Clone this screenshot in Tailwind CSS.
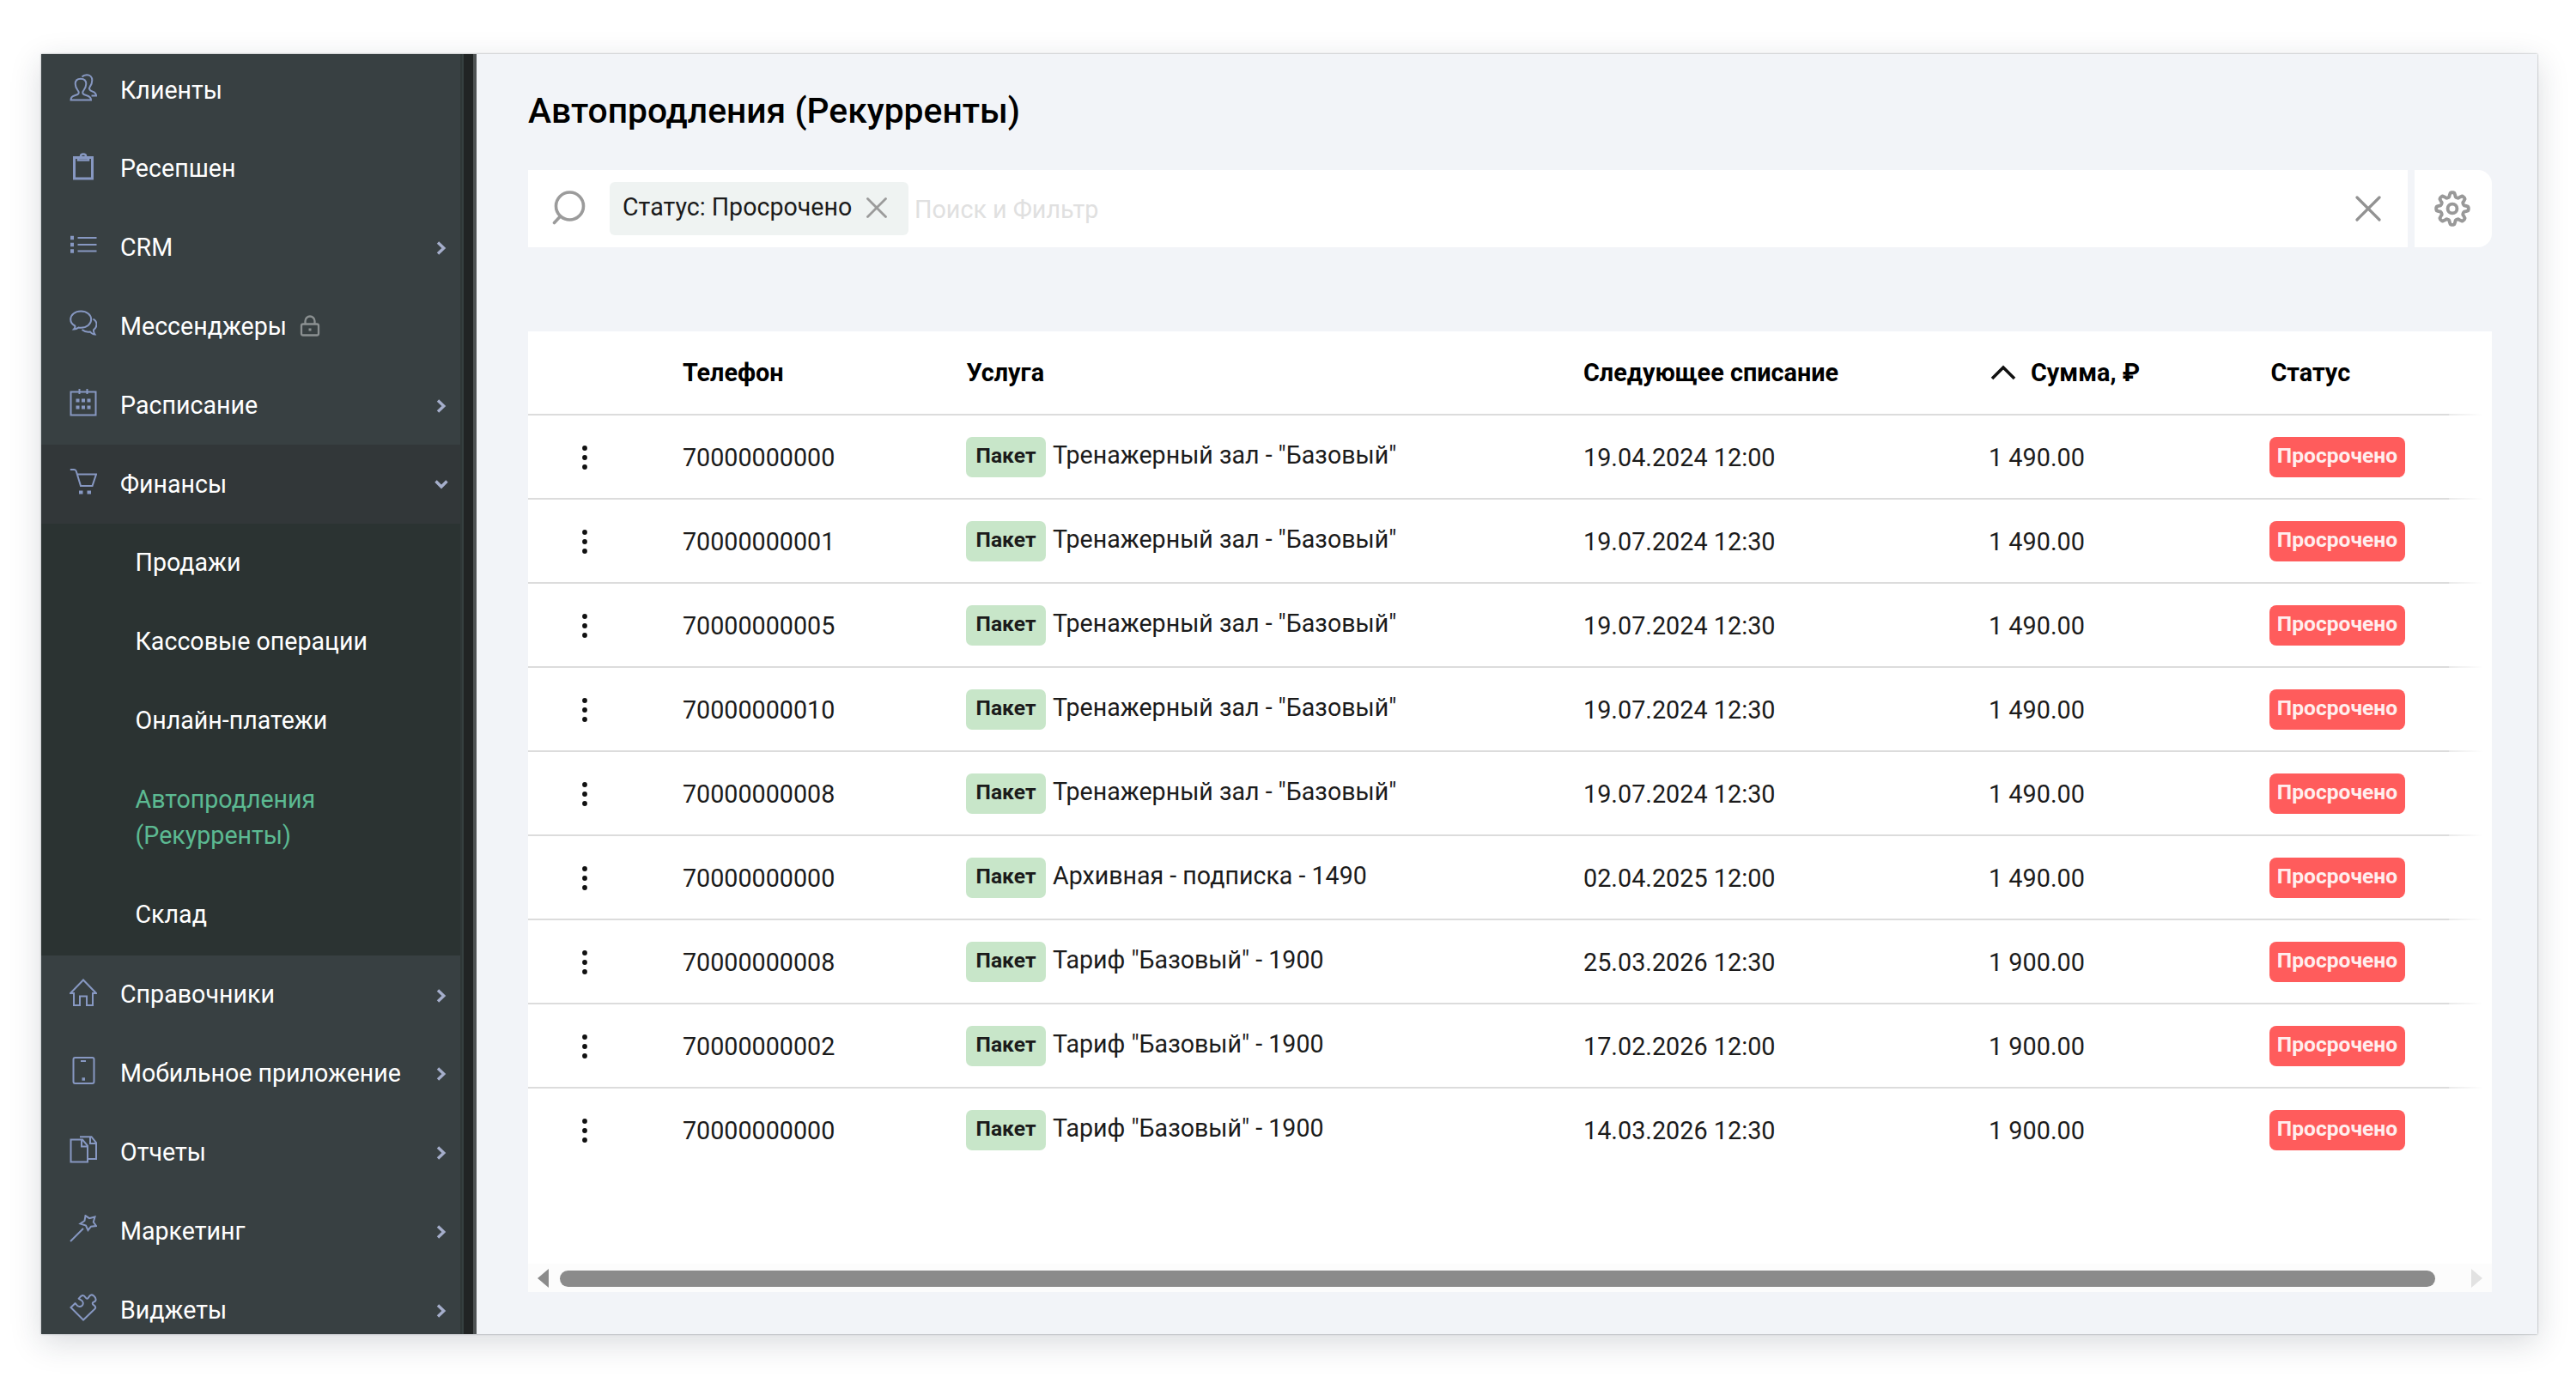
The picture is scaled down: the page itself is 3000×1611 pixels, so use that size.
<!DOCTYPE html>
<html lang="ru">
<head>
  <meta charset="UTF-8">
  <meta name="viewport" content="width=device-width, initial-scale=1.0">
  <title>Автопродления (Рекурренты)</title>
  <script src="https://cdn.jsdelivr.net/npm/@tailwindcss/browser@4"></script>
</head>
<body class="bg-white pt-[63px] pl-12 h-[1611px] overflow-hidden font-[Roboto,sans-serif] text-[28.8px] leading-none text-[#1b1b1b]">
  <div class="flex w-[2907px] h-[1491px] overflow-hidden bg-[#f2f4f8] shadow-[0_0_2px_rgba(40,50,60,0.45),0_10px_34px_rgba(30,40,60,0.17)]">

    <!-- Sidebar -->
    <aside class="w-[490px] shrink-0 bg-[#384042] text-white text-[28.600px] font-[450] border-r-2 border-[#2f3737]">
      <nav id="menu" class="-mt-1"></nav>
    </aside>
    <!-- Sidebar scrollbar -->
    <div class="w-[17px] shrink-0 bg-[#212424] border-l-2 border-l-[#364040] border-r-4 border-r-[#4f5354]"></div>

    <!-- Main Content -->
    <main class="w-[2287px] ml-[60px]">
      <h1 class="pt-[42px] h-[135px] text-[40.8px] leading-[48px] font-medium text-black">Автопродления (Рекурренты)</h1>

      <!-- Search -->
      <div class="flex gap-2 h-[90px]">
        <div class="flex items-center w-[2189px] bg-white">
          <svg class="ml-[28px] -mt-[2px] w-[40px] h-[42px]" viewBox="0 0 40 42" fill="none" stroke="#9b9b9b" stroke-width="3.6" stroke-linecap="round">
            <circle cx="20.500" cy="19" r="16"/><path d="M9.500 31L2.500 38.500"/>
          </svg>
          <div class="ml-[27px] w-[348px] h-[62px] pl-[15px] rounded-md bg-[#eff3f2] flex items-center">
            <span class="-mt-[4px] w-[284px] whitespace-nowrap text-[28.600px]">Статус: Просрочено</span>
            <svg class="-mt-[2px] w-[24px] h-[24px]" viewBox="0 0 24 24" fill="none" stroke="#9b9b9b" stroke-width="2.8" stroke-linecap="round"><path d="M1.500 1.500L22.500 22.500M22.500 1.500L1.500 22.500"/></svg>
          </div>
          <span class="ml-[7px] mt-[2px] text-[28.700px] text-[#e0e0e0]">Поиск и Фильтр</span>
          <svg class="ml-auto mr-[31px] w-[30px] h-[30px]" viewBox="0 0 30 30" fill="none" stroke="#929292" stroke-width="3.2" stroke-linecap="round"><path d="M2 2L28 28M28 2L2 28"/></svg>
        </div>
        <div class="flex items-center justify-center w-[90px] bg-white rounded-r-2xl">
          <svg class="-ml-[2px] w-[42px] h-[42px]" viewBox="0 0 24 24" fill="none" stroke="#999" stroke-width="2.200" stroke-linejoin="round">
            <circle cx="12" cy="12" r="3.100"/>
            <path id="gear"/>
          </svg>
        </div>
      </div>

      <!-- Table -->
      <div class="mt-[98px] h-[1119px] bg-white flex flex-col">
        <div class="relative">
          <div class="flex items-center h-[98px] border-b-2 border-[#dcdcdc] pr-4 text-black font-bold">
            <div class="w-[180px]"></div>
            <div class="w-[330.500px]">Телефон</div>
            <div class="w-[718.500px]">Услуга</div>
            <div class="w-[474px]">Следующее списание</div>
            <div class="w-[326.500px] flex items-center">
              <svg class="w-[30px] h-[18px] mr-[17px]" viewBox="0 0 30 18" fill="none" stroke="#111" stroke-width="3.600"><path d="M2 16L15 3L28 16"/></svg>
              Сумма, ₽
            </div>
            <div>Статус</div>
          </div>
          <div id="rows"></div>
          <!-- Fade on the scrollable edge -->
          <div class="absolute right-0 top-0 w-[50px] h-full bg-linear-to-r from-white/40 to-white to-80%"></div>
        </div>

        <!-- Horizontal scrollbar -->
        <div class="mt-auto h-[33px] pt-[1px] bg-[#fcfcfc] flex items-center">
          <svg class="ml-[11px] w-[13px] h-[22px]" viewBox="0 0 13 22"><path d="M0 11L13 0V22Z" fill="#8b8b8b"/></svg>
          <div class="ml-[13px] w-[2184px] h-[19px] rounded-full bg-[#8b8b8b]"></div>
          <svg class="ml-[42px] w-[13px] h-[22px]" viewBox="0 0 13 22"><path d="M13 11L0 0V22Z" fill="#e2e2e2"/></svg>
        </div>
      </div>
    </main>
  </div>

  <script>
    const icons = {
      users: '<path d="M1.500 30.500c0-3.500 1.500-4.300 4.500-5.200 2-.6 4-1.300 4.500-2.300.4-1 .3-2-.3-2.800C8.500 18 6.700 16 6.700 11.800 6.700 8 9.200 5.800 13 5.800s6.300 2.200 6.300 6c0 4.200-1.800 6.200-3.500 8.400-.6.800-.7 1.800-.3 2.800.5 1 2.500 1.700 4.500 2.300 3 .9 5 1.700 5 5.200z"/><path d="M14.500 3.500C15.800 2 17.500 1.200 20 1.200c3.800 0 6.300 2.400 6.300 6.200 0 4-1.300 6-2.600 7.800-.8 1-.8 2.300-.2 3.200.6 1 2 1.500 3.500 2.200 2.500 1 4 1.800 4 5h-5.500"/>',
      clipboard: '<path d="M5.500 5.500h21V30h-21z" stroke-width="3"/><path d="M10 5.500h12v3H10z" stroke-width="2.500"/><path d="M13 4a3 2.500 0 0 1 6 0" stroke-width="2.500"/>',
      list: '<path d="M9.500 8h22M9.500 16h22M9.500 23.500h22"/><path d="M1 8h4M1 16h4M1 23.500h4" stroke-width="4.500"/>',
      chat: '<path d="M5 22.500c1.500-1.500 1.700-3 1.200-4C3 16.800 1.200 14 1.200 11 1.200 5.500 6.500 1.500 13.200 1.500s12 4 12 9.500-5.300 9.700-12 9.700c-1 0-1.700 0-2.700-.2C9 21.700 7.500 22.600 5 22.500z"/><path d="M27.500 10.500c2.500 1.500 4 3.800 4 6.500 0 2.500-1.500 4.700-3.500 6.200-.3 2 .5 3.800 1.500 5.300-2.500 0-4.300-1.500-5.500-3-3.500.5-7-.4-9.500-2.500"/>',
      calendar: '<path d="M1.500 3.500h29v27h-29zM11.500 0v6M20.500 0v6"/><path d="M7.500 13.500h4M14 13.500h4M20.500 13.500h4M7.500 21.500h4M14 21.500h4M20.500 21.500h4" stroke-width="4"/>',
      cart: '<path d="M.8 2h4.500c1.500 0 2 .5 2.500 2L13 21h13.500L31 7.500H9"/><path d="M11 28.500h4.500M20.500 28.500H25" stroke-width="4"/>',
      home: '<path d="M1 17L16 1.500 31 17h-4v14h-7V20.500h-8V31H5V17z"/>',
      tablet: '<rect x="4.500" y="1" width="24" height="30" rx="2"/><path d="M13 5h6"/><path d="M14.500 26h3.500" stroke-width="3.500"/>',
      docs: '<path d="M1.500 4.500H15L21 11.500V30.500H1.500zM14 4.500v8h7"/><path d="M12 1.200h13.500l5.500 7V27h-9M24 1.200V9h7"/>',
      wand: '<path d="M1 31L16 16"/><path d="M18.500 1.200l4.500 3 6.500-1.700-1.700 6 3.200 4.500-6 .7-3.500 4.300-2.500-5.500-6.500-2 5-3.500z"/>',
      puzzle: '<path d="M16 30.500L1.500 16l5-4.800c1.500.5 1.500 3.800 5 3.800 2.500 0 4.300-2 4.300-4.300 0-3-3.300-3.200-5-5 3-4.200 5.500-5 7.700-1.500 1.500 2.300 2.700 1.800 3.700 0C24 1 26 .8 28 2.200c3.500 3 3.500 6.500 0 7.500-1.500.7-1.800 2 0 3.500 3.500 2.300 2.500 4-.5 6.300z"/>'
    };
    const menu = [
      ['users', 'Клиенты'],
      ['clipboard', 'Ресепшен'],
      ['list', 'CRM', 'right'],
      ['chat', 'Мессенджеры', 'lock'],
      ['calendar', 'Расписание', 'right'],
      ['cart', 'Финансы', 'down'],
      ['home', 'Справочники', 'right'],
      ['tablet', 'Мобильное приложение', 'right'],
      ['docs', 'Отчеты', 'right'],
      ['wand', 'Маркетинг', 'right'],
      ['puzzle', 'Виджеты', 'right']
    ];
    const marks = {
      right: '<svg class="ml-auto mr-[16px] mt-[2px] w-[12px] h-[16px]" viewBox="0 0 12 16" fill="none" stroke="#a5aecb" stroke-width="3.400"><path d="M2 1.500L8.800 8L2 14.500"/></svg>',
      down: '<svg class="ml-auto mr-[14px] w-[16px] h-[12px]" viewBox="0 0 16 12" fill="none" stroke="#a5aecb" stroke-width="3.400"><path d="M1.500 2.500L8 9L14.500 2.500"/></svg>',
      lock: '<svg class="ml-[15px] -mt-[1px] w-[24px] h-[26px]" viewBox="0 0 24 26" fill="none" stroke="#8b9091" stroke-width="2.300"><rect x="2" y="10.500" width="20" height="13" rx="2"/><path d="M6.500 10V7a5.500 5.500 0 0 1 11 0v3"/><path d="M10.500 17h3" stroke-width="3"/></svg>'
    };
    const submenu = `
      <ul class="bg-[#2b3332] h-[503px]">
        <li class="h-[91.800px] pl-[109.500px] flex items-center">Продажи</li>
        <li class="h-[91.800px] pl-[109.500px] flex items-center">Кассовые операции</li>
        <li class="h-[91.800px] pl-[109.500px] flex items-center">Онлайн-платежи</li>
        <li class="h-[134.500px] pl-[109.500px] flex items-center leading-[42.500px] text-[#5cba92]">Автопродления<br>(Рекурренты)</li>
        <li class="h-[91.800px] pl-[109.500px] flex items-center">Склад</li>
      </ul>`;
    document.getElementById('menu').innerHTML = menu.map(([icon, label, mark]) => `
      <div class="flex items-center h-[91.800px] pl-[33px] ${mark === 'down' ? 'bg-[#323739]' : ''}">
        <svg class="w-8 h-8 -mt-[6px] mr-[27px] shrink-0" viewBox="0 0 32 32" fill="none" stroke="#8798c2" stroke-width="2">${icons[icon]}</svg>
        <span class="whitespace-nowrap">${label}</span>
        ${mark ? marks[mark] : ''}
      </div>${mark === 'down' ? submenu : ''}`).join('');

    const gym = 'Тренажерный зал - "Базовый"';
    const rows = [
      ['70000000000', gym, '19.04.2024 12:00', '1 490.00'],
      ['70000000001', gym, '19.07.2024 12:30', '1 490.00'],
      ['70000000005', gym, '19.07.2024 12:30', '1 490.00'],
      ['70000000010', gym, '19.07.2024 12:30', '1 490.00'],
      ['70000000008', gym, '19.07.2024 12:30', '1 490.00'],
      ['70000000000', 'Архивная - подписка - 1490', '02.04.2025 12:00', '1 490.00'],
      ['70000000008', 'Тариф "Базовый" - 1900', '25.03.2026 12:30', '1 900.00'],
      ['70000000002', 'Тариф "Базовый" - 1900', '17.02.2026 12:00', '1 900.00'],
      ['70000000000', 'Тариф "Базовый" - 1900', '14.03.2026 12:30', '1 900.00']
    ];
    document.getElementById('rows').innerHTML = rows.map(([phone, service, date, sum]) => `
      <div class="flex items-center h-[98px] pt-[2px] border-b-2 border-[#dcdcdc] last:border-transparent">
        <div class="w-[180px] pl-[61px]">
          <svg class="w-[10px] h-[30px]" viewBox="0 0 10 30" fill="#111"><circle cx="5" cy="4" r="2.900"/><circle cx="5" cy="15" r="2.900"/><circle cx="5" cy="26" r="2.900"/></svg>
        </div>
        <div class="w-[330px] text-[28.700px]">${phone}</div>
        <div class="w-[719px] flex items-center">
          <span class="flex items-center justify-center w-[93px] h-[47px] -mt-[2px] pb-[1px] rounded-[7px] bg-[#c8e6c9] text-[24.600px] font-bold">Пакет</span>
          <span class="ml-[8px] -mt-[6px] text-[28.600px]">${service}</span>
        </div>
        <div class="w-[472px]">${date}</div>
        <div class="w-[327px]">${sum}</div>
        <span class="flex items-center justify-center w-[158px] h-[47px] -mt-[2px] pb-[1px] rounded-[8px] bg-[#ff5c5c] text-[#ffeeee] text-[24.600px] font-bold">Просрочено</span>
      </div>`).join('');

    // Gear outline: eight rounded teeth around the hub
    let d = '';
    for (let i = 0; i <= 96; i++) {
      const a = i / 96 * Math.PI * 2;
      const r = 9.300 + 1.500 * Math.tanh(2.200 * Math.cos(8 * a));
      d += (i ? 'L' : 'M') + (12 + r * Math.cos(a)).toFixed(2) + ' ' + (12 + r * Math.sin(a)).toFixed(2);
    }
    document.getElementById('gear').setAttribute('d', d + 'Z');
  </script>
</body>
</html>
